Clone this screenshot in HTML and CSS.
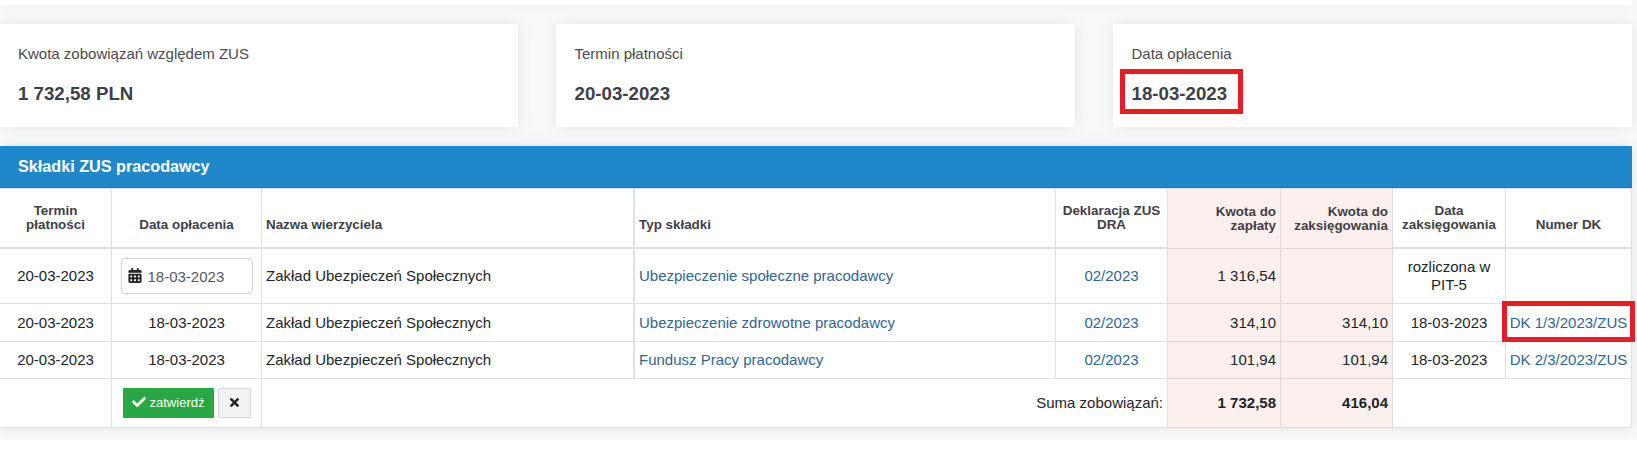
FILE: index.html
```html
<!DOCTYPE html>
<html lang="pl">
<head>
  <meta charset="UTF-8">
  <meta name="viewport" content="width=device-width, initial-scale=1.0">
  <title>Składki ZUS pracodawcy</title>
  <link rel="stylesheet" href="styles.css">
</head>
<body>
  <div class="page">
    <div class="top-panel"></div>

    <div class="cards">
      <div class="card">
        <div class="card-label">Kwota zobowiązań względem ZUS</div>
        <div class="card-value">1 732,58 PLN</div>
      </div>
      <div class="card">
        <div class="card-label">Termin płatności</div>
        <div class="card-value">20-03-2023</div>
      </div>
      <div class="card">
        <div class="card-label">Data opłacenia</div>
        <div class="card-value"><span class="marked">18-03-2023</span></div>
      </div>
    </div>

    <div class="panel">
      <div class="panel-title">Składki ZUS pracodawcy</div>
      <table class="table">
        <colgroup>
          <col class="col-term">
          <col class="col-paid">
          <col class="col-name">
          <col class="col-type">
          <col class="col-decl">
          <col class="col-due">
          <col class="col-book">
          <col class="col-date">
          <col class="col-dk">
        </colgroup>
        <thead>
          <tr>
            <th>Termin płatności</th>
            <th>Data opłacenia</th>
            <th class="left thick">Nazwa wierzyciela</th>
            <th class="left">Typ składki</th>
            <th>Deklaracja ZUS DRA</th>
            <th class="amount">Kwota do zapłaty</th>
            <th class="amount">Kwota do zaksięgowania</th>
            <th>Data zaksięgowania</th>
            <th>Numer DK</th>
          </tr>
        </thead>
        <tbody>
          <tr class="row-first">
            <td>20-03-2023</td>
            <td>
              <div class="date-input">
                <svg class="icon-calendar" viewBox="0 0 448 512"><path fill="currentColor" d="M0 464c0 26.500 21.500 48 48 48h352c26.500 0 48-21.500 48-48V192H0v272zm320-196c0-6.600 5.400-12 12-12h40c6.600 0 12 5.400 12 12v40c0 6.600-5.400 12-12 12h-40c-6.600 0-12-5.400-12-12v-40zm0 128c0-6.600 5.400-12 12-12h40c6.600 0 12 5.400 12 12v40c0 6.600-5.400 12-12 12h-40c-6.600 0-12-5.400-12-12v-40zM192 268c0-6.600 5.400-12 12-12h40c6.600 0 12 5.400 12 12v40c0 6.600-5.400 12-12 12h-40c-6.600 0-12-5.400-12-12v-40zm0 128c0-6.600 5.400-12 12-12h40c6.600 0 12 5.400 12 12v40c0 6.600-5.400 12-12 12h-40c-6.600 0-12-5.400-12-12v-40zM64 268c0-6.600 5.400-12 12-12h40c6.600 0 12 5.400 12 12v40c0 6.600-5.400 12-12 12H76c-6.600 0-12-5.400-12-12v-40zm0 128c0-6.600 5.400-12 12-12h40c6.600 0 12 5.400 12 12v40c0 6.600-5.400 12-12 12H76c-6.600 0-12-5.400-12-12v-40zM400 64h-48V16c0-8.800-7.200-16-16-16h-32c-8.800 0-16 7.200-16 16v48H160V16c0-8.800-7.200-16-16-16h-32c-8.800 0-16 7.200-16 16v48H48C21.500 64 0 85.500 0 112v48h448v-48c0-26.500-21.500-48-48-48z"/></svg>
                <span>18-03-2023</span>
              </div>
            </td>
            <td class="left thick">Zakład Ubezpieczeń Społecznych</td>
            <td class="left"><a href="#">Ubezpieczenie społeczne pracodawcy</a></td>
            <td><a href="#">02/2023</a></td>
            <td class="amount">1 316,54</td>
            <td class="amount"></td>
            <td>rozliczona w PIT-5</td>
            <td></td>
          </tr>
          <tr class="row-second">
            <td>20-03-2023</td>
            <td>18-03-2023</td>
            <td class="left thick">Zakład Ubezpieczeń Społecznych</td>
            <td class="left"><a href="#">Ubezpieczenie zdrowotne pracodawcy</a></td>
            <td><a href="#">02/2023</a></td>
            <td class="amount">314,10</td>
            <td class="amount">314,10</td>
            <td>18-03-2023</td>
            <td class="number marked-cell"><a href="#">DK 1/3/2023/ZUS</a></td>
          </tr>
          <tr class="row-third">
            <td>20-03-2023</td>
            <td>18-03-2023</td>
            <td class="left thick">Zakład Ubezpieczeń Społecznych</td>
            <td class="left"><a href="#">Fundusz Pracy pracodawcy</a></td>
            <td><a href="#">02/2023</a></td>
            <td class="amount">101,94</td>
            <td class="amount">101,94</td>
            <td>18-03-2023</td>
            <td class="number"><a href="#">DK 2/3/2023/ZUS</a></td>
          </tr>
          <tr class="row-sum">
            <td></td>
            <td>
              <div class="buttons">
                <button class="btn btn-success" type="button">
                  <svg class="icon-check" viewBox="0 0 512 512"><path fill="currentColor" d="M173.900 439.400l-166.400-166.400c-10-10-10-26.200 0-36.200l36.200-36.200c10-10 26.200-10 36.200 0L192 312.700 432.100 72.600c10-10 26.200-10 36.200 0l36.200 36.200c10 10 10 26.200 0 36.200L210.100 439.400c-10 10-26.200 10-36.200 0z"/></svg>
                  <span>zatwierdź</span>
                </button>
                <button class="btn btn-light" type="button">
                  <svg class="icon-times" viewBox="0 0 10 10"><path d="M1.500 1.500l7 7M8.500 1.500l-7 7" stroke="currentColor" stroke-width="2.300" fill="none"/></svg>
                </button>
              </div>
            </td>
            <td class="right" colspan="3">Suma zobowiązań:</td>
            <td class="amount">1 732,58</td>
            <td class="amount">416,04</td>
            <td colspan="2"></td>
          </tr>
        </tbody>
      </table>
    </div>
  </div>
</body>
</html>
```
FILE: styles.css
```css
*,
*::after {
  box-sizing: border-box;
}
body {
  margin: 0;
  background: #fff;
  color: #212529;
  font-family: "Liberation Sans", Arial, sans-serif;
  font-size: 15px;
}
a {
  color: #2f6692;
  text-decoration: none;
}
.page {
  height: 440px;
  padding-right: 5px;
  background: #f8f9fb;
  overflow: hidden;
}
.top-panel,
.card,
.panel {
  background: #fff;
  box-shadow: 0 0 15px rgba(0, 0, 0, 0.09);
}
.top-panel {
  height: 5px;
}
.cards {
  display: grid;
  grid-template-columns: 518px 519px 519px;
  gap: 38px;
  margin: 19px 0;
}
.card {
  height: 103px;
  padding: 20px 18px;
}
.card + .card {
  padding-left: 18.5px;
}
.card-label {
  color: #4a4a4f;
  line-height: 20px;
}
.card-value {
  margin-top: 18px;
  color: #3f4045;
  font-size: 18.7px;
  font-weight: bold;
  line-height: 24px;
}
.marked {
  position: relative;
}
.marked::after {
  content: "";
  position: absolute;
  top: -14px;
  left: -11.5px;
  width: 123px;
  height: 45px;
  border: 5px solid #e81c24;
}
.panel-title {
  height: 42px;
  padding-left: 18px;
  background: #1f88ca;
  border-bottom: 1px solid #1c78b5;
  color: #fff;
  font-size: 16.2px;
  font-weight: bold;
  line-height: 41px;
}
.table {
  width: 1632px;
  table-layout: fixed;
  border-collapse: separate;
  border-spacing: 0;
  border-top: 1px solid #dee2e6;
}
.col-term { width: 112px; }
.col-paid { width: 150px; }
.col-name { width: 373px; }
.col-type { width: 421px; }
.col-decl { width: 112px; }
.col-due { width: 113px; }
.col-book { width: 112px; }
.col-date { width: 113px; }
.col-dk { width: 126px; }
.table th,
.table td {
  padding: 0 4px;
  border-right: 1px solid #dee2e6;
  border-bottom: 1px solid #dee2e6;
  text-align: center;
  line-height: 18px;
}
.table th {
  height: 60px;
  padding-bottom: 15px;
  border-bottom-width: 2px;
  color: #3f4047;
  font-size: 13.4px;
  line-height: 14px;
  vertical-align: bottom;
}
.table .left {
  text-align: left;
}
.table .right {
  text-align: right;
}
.table .thick {
  border-right-width: 2px;
}
.table .amount {
  background: #fcf0ee;
  border-color: #e1d8d9;
  text-align: right;
}
.table th.amount {
  border-bottom-width: 1px;
}
.table .number {
  padding: 0 2px;
  white-space: nowrap;
}
.row-first td { height: 55px; }
.row-second td { height: 38px; }
.row-third td { height: 37px; }
.row-sum td { height: 49px; }
.row-sum .amount {
  font-weight: bold;
}
.marked-cell {
  position: relative;
}
.marked-cell::after {
  content: "";
  position: absolute;
  top: -3px;
  left: -4px;
  width: 133px;
  height: 41px;
  border: 5px solid #e81c24;
}
.date-input {
  display: flex;
  align-items: center;
  gap: 6px;
  width: 132px;
  height: 36px;
  margin: 0 auto;
  padding: 1px 6px 0;
  border: 1px solid #ced4da;
  border-radius: 4px;
  color: #55585c;
}
.icon-calendar {
  width: 14px;
  height: 15px;
  margin-top: -3px;
  color: #212529;
}
.buttons {
  display: flex;
  justify-content: center;
  gap: 4px;
}
.btn {
  display: flex;
  align-items: center;
  justify-content: center;
  height: 30px;
  padding: 0 0 2px;
  border: 1px solid transparent;
  border-radius: 1px;
  font-family: inherit;
  font-size: 13px;
}
.btn-success {
  gap: 4px;
  width: 91px;
  background: #28a745;
  color: #fff;
}
.btn-light {
  width: 33px;
  background: #f1f2f4;
  border-color: #d6d9dc;
  color: #212529;
}
.icon-check {
  width: 14px;
  height: 14px;
}
.icon-times {
  width: 11px;
  height: 11px;
}
```
